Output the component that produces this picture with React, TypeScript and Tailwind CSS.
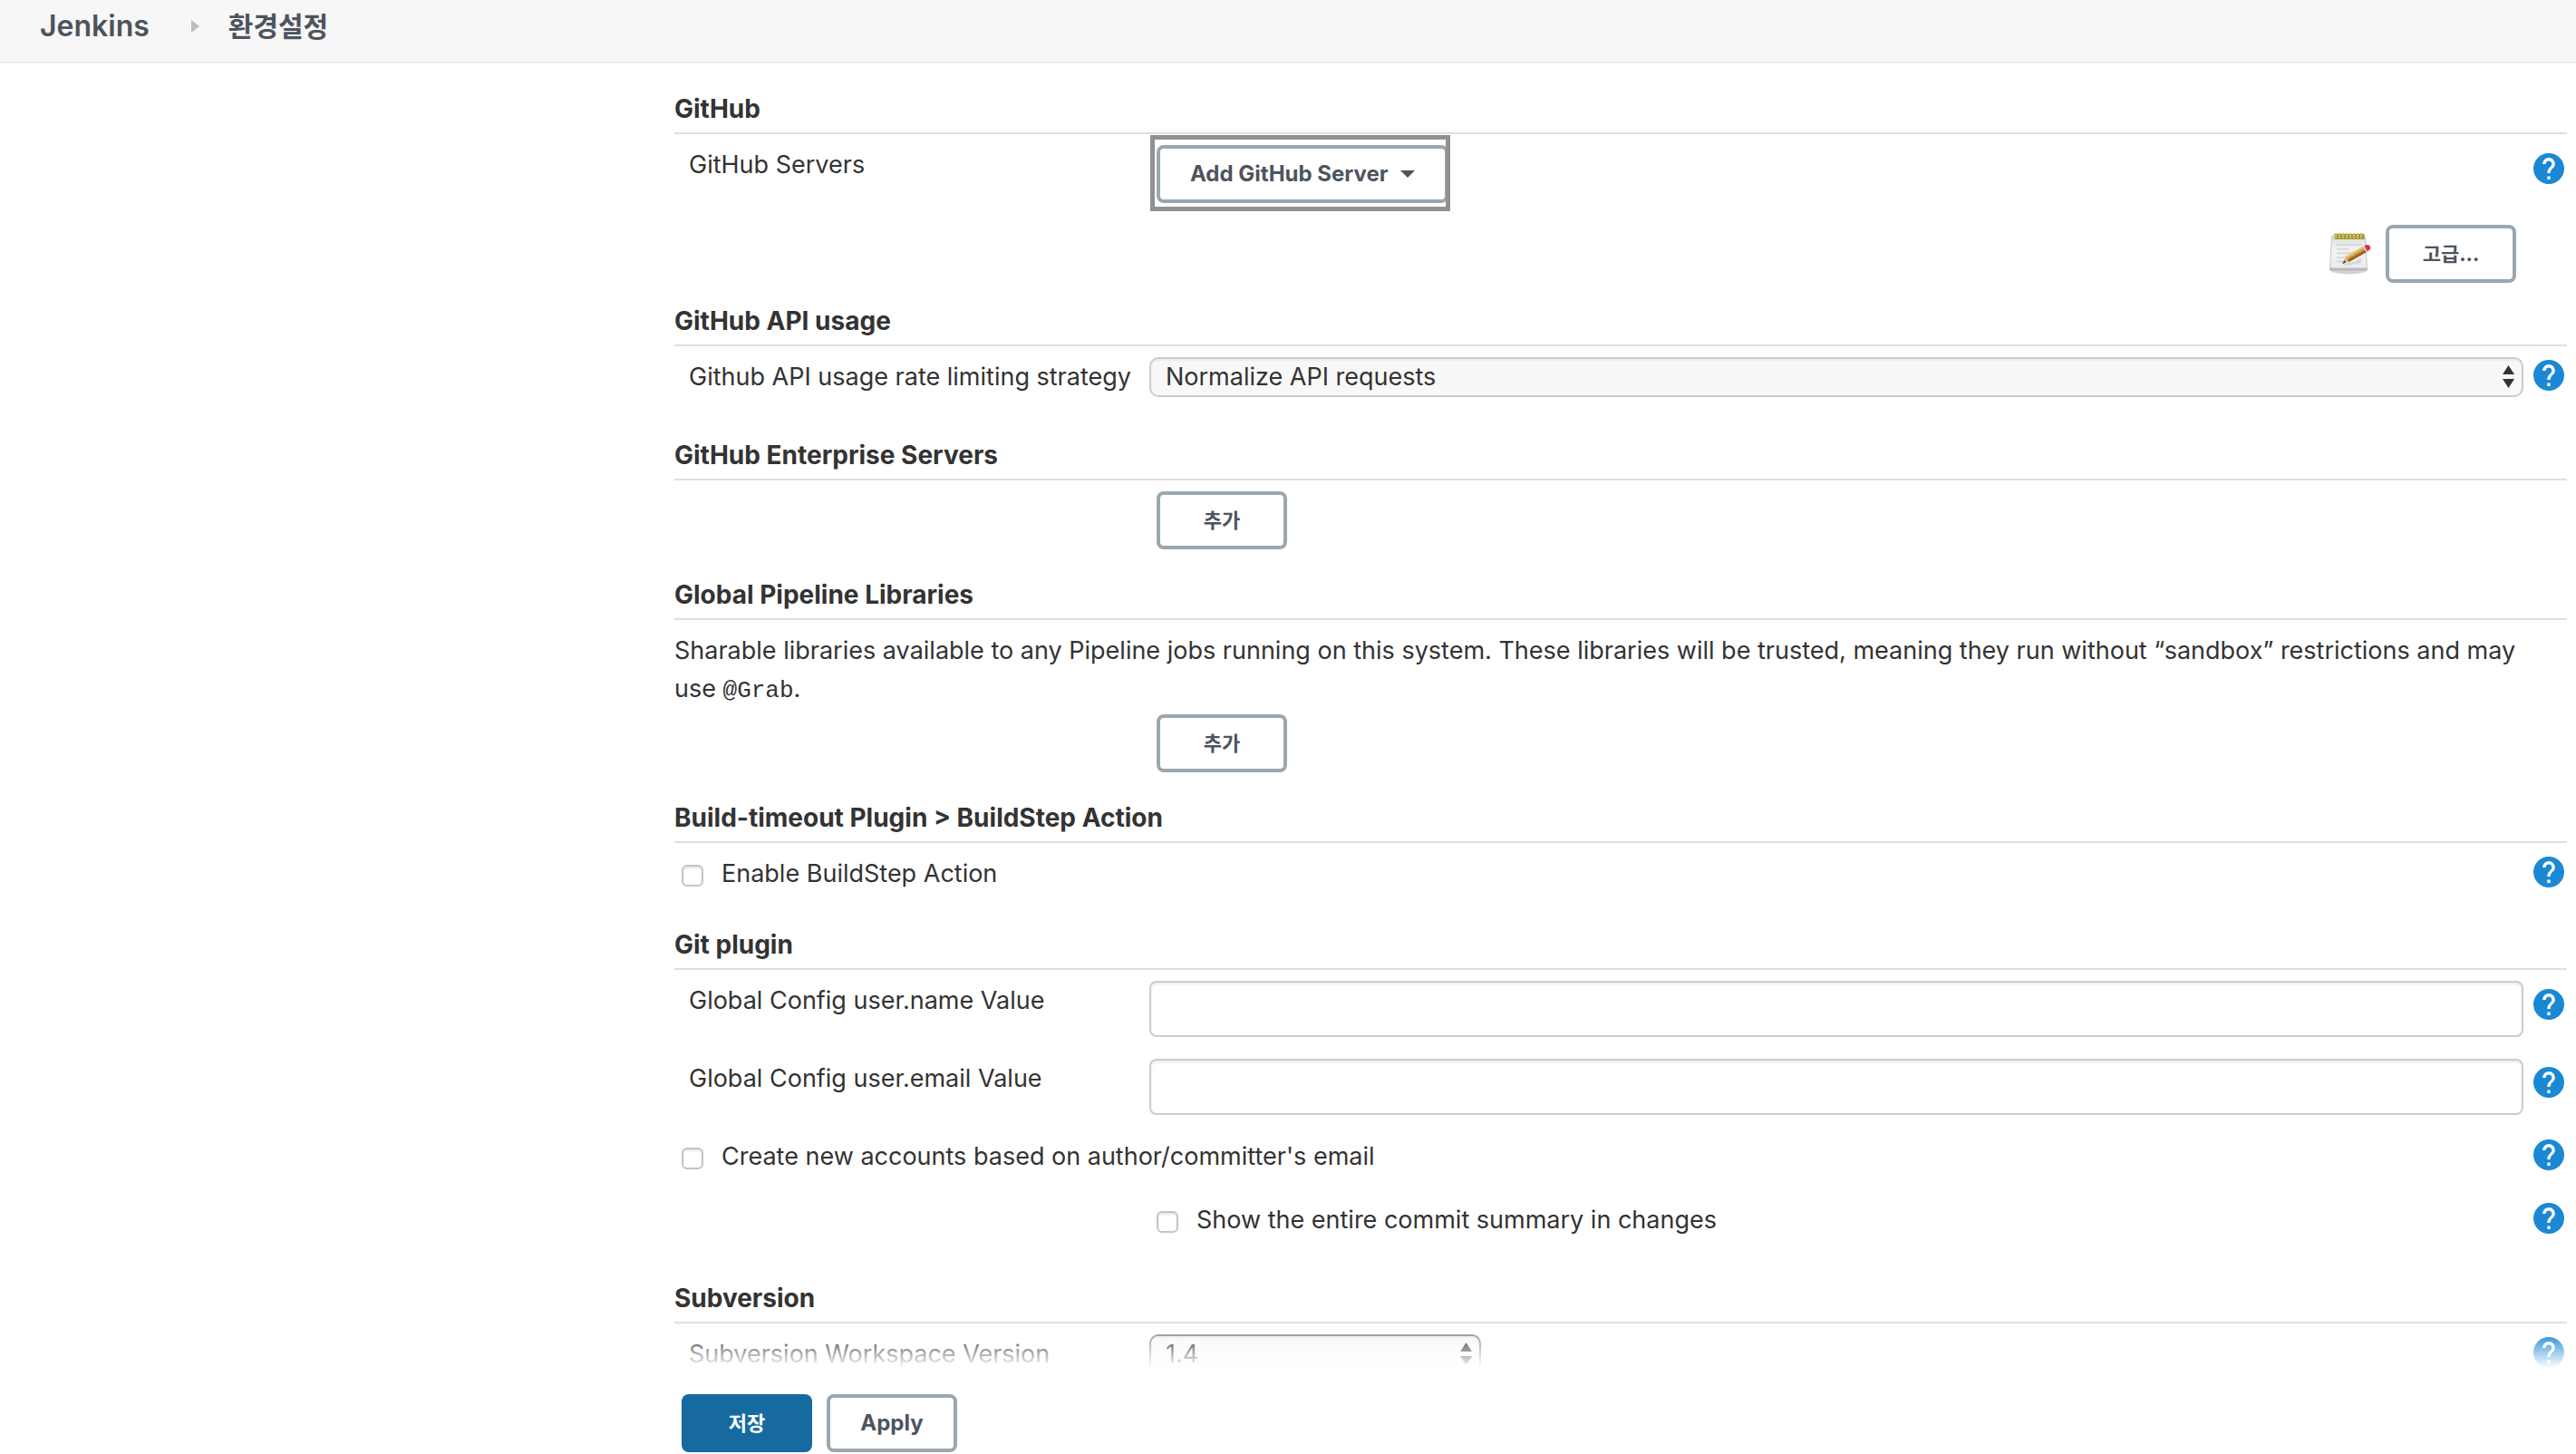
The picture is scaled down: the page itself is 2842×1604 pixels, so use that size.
import type { ReactNode } from "react";

const libraryText =
  "Sharable libraries available to any Pipeline jobs running on this system. These libraries will be trusted, meaning they run without “sandbox” restrictions and may use ";

const buttonStyle =
  "h-16 min-w-36 px-[33px] rounded-lg border-4 border-[#9ba7af] bg-white text-[#4d545d] font-bold";

function HelpLink({ topic, className }: { topic: string; className: string }) {
  return (
    <a href="#help" aria-label={`Help: ${topic}`} className={className}>
      <svg width="34" height="34" viewBox="2 2 20 20" fill="#1a88d4">
        <path d="M12 2a10 10 0 1 0 0 20 10 10 0 0 0 0-20zm1 17h-2v-2h2v2zm2.07-7.75-.9.92C13.45 12.9 13 13.5 13 15h-2v-.5c0-1.1.45-2.1 1.17-2.83l1.24-1.26c.37-.36.59-.86.59-1.41 0-1.1-.9-2-2-2s-2 .9-2 2H8c0-2.21 1.79-4 4-4s4 1.79 4 4c0 .88-.36 1.68-.93 2.25z" />
      </svg>
    </a>
  );
}

function Notepad() {
  return (
    <svg width="48" height="48" viewBox="0 0 48 48" aria-hidden="true">
      <defs>
        <linearGradient id="paper" x1="0" y1="0" x2="0" y2="1">
          <stop offset="0" stopColor="#dedede" />
          <stop offset="0.4" stopColor="#f2f2f2" />
          <stop offset="1" stopColor="#ebebeb" />
        </linearGradient>
      </defs>
      <path d="M4 44q20 5 38 0l-1-3H5z" fill="#d4d4d4" />
      <path
        d="M6 4h34q1.500 0 1.500 2l2 36H2.500L4.500 6q0-2 1.500-2z"
        fill="url(#paper)"
        stroke="#c6c6c6"
      />
      <path d="M2.500 39.500h41l.3 3H2.300z" fill="#b9b9b9" />
      <rect x="7.500" y="2" width="33" height="6" fill="#a3953a" />
      <path
        d="M9 1v6M13 1v6M17 1v6M21 1v6M25 1v6M29 1v6M33 1v6M37 1v6"
        stroke="#cdbd5c"
        strokeWidth="2"
      />
      <path
        d="M10 14h28M10 18.700h13M10 23.300h26M10 28h15M10 32.500h12"
        stroke="#d2d2d2"
        strokeWidth="1.600"
      />
      <path d="M17 35l13-2 8-5-2 6-16 3z" fill="#c4c4c4" opacity="0.6" />
      <path d="M16.500 34.500l4-8 4 6z" fill="#dfc08d" />
      <path d="M16 35l2.500-4 1.700 2.600z" fill="#4b3a22" />
      <path d="M20 27l19-11 4 6-19.500 11z" fill="#d39a3c" />
      <path d="M23.500 33L43 22l-1.500-2.200L22 30.500z" fill="#9a6420" />
      <path d="M20.500 27.300l18.500-11 .9 1.500-18.500 10.800z" fill="#f0c775" />
      <path d="M38.500 16.300l2.500-1.400 4 6-2.500 1.400z" fill="#c9c9c9" />
      <path d="M40.500 15q3.500-2 5.500-.3 2.500 2.300.3 5l-2.500 1.500z" fill="#dd3540" />
    </svg>
  );
}

function Section({
  title,
  className = "mt-[29px]",
  children,
}: {
  title: string;
  className?: string;
  children: ReactNode;
}) {
  return (
    <section className={className}>
      <h2 className="pb-[5px] border-b-2 border-[#dfdfdf] text-[28px] leading-[42px] font-bold">
        {title}
      </h2>
      {children}
    </section>
  );
}

function Row({
  label,
  htmlFor,
  help,
  helpClass = "pt-[15px]",
  className = "min-h-[70px]",
  children,
}: {
  label?: string;
  htmlFor?: string;
  help?: string;
  helpClass?: string;
  className?: string;
  children?: ReactNode;
}) {
  return (
    <div
      className={`grid grid-cols-[524px_minmax(0,1fr)_48px] items-start ${className}`}
    >
      <label htmlFor={htmlFor} className="pt-[13px] pl-4 whitespace-nowrap">
        {label}
      </label>
      <div className="pt-3">{children}</div>
      {help && <HelpLink topic={help} className={`pl-[11px] ${helpClass}`} />}
    </div>
  );
}

function CheckRow({
  id,
  label,
  indent,
  className = "h-[70px]",
}: {
  id: string;
  label: string;
  indent?: boolean;
  className?: string;
}) {
  return (
    <div
      className={`flex items-start justify-between ${indent ? "pl-[532px]" : "pl-2"} ${className}`}
    >
      <div className="flex pt-[13px]">
        <input
          id={id}
          type="checkbox"
          className="appearance-none size-6 mt-[11px] mr-5 rounded-md border-2 border-[#c4c4c4] bg-white shadow-[inset_0_2px_2px_#e8e8e8]"
        />
        <label htmlFor={id}>{label}</label>
      </div>
      <HelpLink topic={label} className="w-[37px] pt-[15px]" />
    </div>
  );
}

function Select({
  id,
  value,
  className,
}: {
  id: string;
  value: string;
  className: string;
}) {
  return (
    <div className={`relative ${className}`}>
      <select
        id={id}
        className="block appearance-none w-full h-11 pl-4 pr-10 rounded-[10px] border-2 border-inherit bg-[#f8f8f8] leading-10 shadow-[inset_0_2px_2px_#ececec]"
      >
        <option>{value}</option>
      </select>
      <svg
        width="13"
        height="26"
        viewBox="0 0 13 26"
        fill="#333"
        className="absolute right-[10px] top-[9px] pointer-events-none"
      >
        <path d="M6.500 0L13 10H0zM0 15h13L6.500 25z" />
      </svg>
    </div>
  );
}

function TextRow({ id, label }: { id: string; label: string }) {
  return (
    <Row
      label={label}
      htmlFor={id}
      help={label}
      helpClass="pt-[21px]"
      className="pb-3"
    >
      <input
        id={id}
        type="text"
        className="block w-full h-[62px] px-4 rounded-lg border-2 border-[#ccc] bg-white shadow-[inset_0_2px_3px_#ececec]"
      />
    </Row>
  );
}

export default function App() {
  return (
    <div className="h-screen flex flex-col bg-white text-[#333] text-[27px] leading-[42px] font-['Inter','Noto_Sans_CJK_KR',sans-serif]">
      <nav className="flex items-center h-[70px] shrink-0 pl-11 pb-[11px] border-b-2 border-[#e8edf0] bg-[#f7f7f7] text-[#4d545d] font-semibold">
        <a href="#jenkins" className="text-[32px]">
          Jenkins
        </a>
        <svg width="9" height="14" viewBox="0 0 9 14" className="ml-[46px] mr-8">
          <path d="M0 0l9 7-9 7z" fill="#bcbcbc" />
        </svg>
        <a href="#configure" className="text-[30px]">
          환경설정
        </a>
      </nav>

      <main className="flex-1 min-h-0 overflow-y-auto [scrollbar-width:none] pl-[744px] pr-[10px]">
        <Section title="GitHub">
          <Row
            label="GitHub Servers"
            help="GitHub Servers"
            helpClass="pt-[21px]"
            className="pb-3"
          >
            <div className="relative w-fit ml-2">
              <button
                className={`${buttonStyle} flex items-center gap-[13px] text-2xl`}
              >
                Add GitHub Server
                <svg width="16" height="8" viewBox="0 0 16 8">
                  <path d="M0 0h16L8 8z" fill="#4d545d" />
                </svg>
              </button>
              <span className="absolute -left-[7px] -top-[11px] -bottom-[9px] -right-[2px] border-[5px] border-[#919191] pointer-events-none" />
            </div>
          </Row>
          <div className="flex items-center justify-end gap-4 pt-3 pr-14">
            <Notepad />
            <button className={`${buttonStyle} text-[22px]`}>고급...</button>
          </div>
        </Section>

        <Section title="GitHub API usage" className="mt-[21px]">
          <Row
            label="Github API usage rate limiting strategy"
            htmlFor="strategy"
            help="Github API usage rate limiting strategy"
          >
            <Select
              id="strategy"
              value="Normalize API requests"
              className="border-[#ccc]"
            />
          </Row>
        </Section>

        <Section title="GitHub Enterprise Servers">
          <Row className="">
            <button className={`${buttonStyle} block ml-2 text-[22px]`}>
              추가
            </button>
          </Row>
        </Section>

        <Section title="Global Pipeline Libraries">
          <p className="pt-[13px] pr-6">
            {libraryText}
            <code className="text-[26px] leading-none font-['Liberation_Mono',monospace]">
              @Grab
            </code>
            .
          </p>
          <button className={`${buttonStyle} block mt-[7px] ml-[532px] text-[22px]`}>
            추가
          </button>
        </Section>

        <Section title="Build-timeout Plugin > BuildStep Action">
          <CheckRow
            id="buildstep"
            label="Enable BuildStep Action"
            className="h-[62px]"
          />
        </Section>

        <Section title="Git plugin">
          <TextRow id="user-name" label="Global Config user.name Value" />
          <TextRow id="user-email" label="Global Config user.email Value" />
          <CheckRow
            id="accounts"
            label="Create new accounts based on author/committer's email"
          />
          <CheckRow
            id="summary"
            label="Show the entire commit summary in changes"
            indent
          />
        </Section>

        <Section title="Subversion">
          <Row
            label="Subversion Workspace Version"
            htmlFor="workspace"
            help="Subversion Workspace Version"
          >
            <Select
              id="workspace"
              value="1.4"
              className="w-[366px] border-[#999]"
            />
          </Row>
        </Section>
      </main>

      <footer className="relative flex shrink-0 gap-4 pt-[29px] pb-[2px] pl-[752px] bg-white">
        <div className="absolute inset-x-0 bottom-full h-10 bg-linear-to-b from-white/0 to-white pointer-events-none" />
        <button className="h-16 min-w-36 px-[33px] rounded-lg bg-[#166aa0] text-white text-[22px] font-bold">
          저장
        </button>
        <button className={`${buttonStyle} text-2xl`}>Apply</button>
      </footer>
    </div>
  );
}
